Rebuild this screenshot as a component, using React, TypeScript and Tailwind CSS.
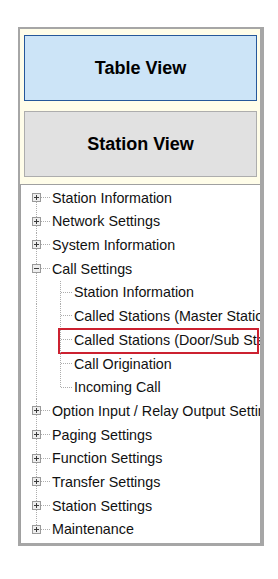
import React from "react"

type Pos = "first" | "mid" | "last"

const DOT = "#adadad"

function Expander({ open }: { open: boolean }) {
  return (
    <g shapeRendering="crispEdges">
      <rect x={11.5} y={7.5} width={8} height={8} fill="#eeeeee" stroke="#9a9a9a" />
      <line x1={13} y1={11.5} x2={18} y2={11.5} stroke="#3a3a3a" />
      {!open && <line x1={15.5} y1={9} x2={15.5} y2={14} stroke="#3a3a3a" />}
    </g>
  )
}

function RootGutter({ pos, open }: { pos: Pos; open: boolean }) {
  const y1 = pos === "first" ? 16 : 0
  const y2 = pos === "last" ? 8 : 24
  return (
    <svg className="h-full w-[30px] shrink-0">
      <g stroke={DOT} strokeDasharray="1 1" shapeRendering="crispEdges">
        <line x1={15.5} y1={y1} x2={15.5} y2={y2} />
        <line x1={20} y1={11.5} x2={29} y2={11.5} />
      </g>
      <Expander open={open} />
    </svg>
  )
}

function ChildGutter({ last }: { last: boolean }) {
  return (
    <svg className="h-full w-[52px] shrink-0">
      <g stroke={DOT} strokeDasharray="1 1" shapeRendering="crispEdges">
        <line x1={15.5} y1={0} x2={15.5} y2={24} />
        <line x1={39.5} y1={0} x2={39.5} y2={last ? 12 : 24} />
        <line x1={40} y1={11.5} x2={51} y2={11.5} />
      </g>
    </svg>
  )
}

const rootsBefore = ["Station Information", "Network Settings", "System Information"]
const children = [
  "Station Information",
  "Called Stations (Master Station)",
  "Called Stations (Door/Sub Station)",
  "Call Origination",
  "Incoming Call",
]
const rootsAfter = [
  "Option Input / Relay Output Settings",
  "Paging Settings",
  "Function Settings",
  "Transfer Settings",
  "Station Settings",
  "Maintenance",
]

function Label({ text }: { text: string }) {
  return <span className="whitespace-nowrap pl-[1px] text-[14.3px] leading-none text-[#111]">{text}</span>
}

export default function App() {
  return (
    <div className="min-h-[579px] bg-white pl-[18px] pt-[27px]" style={{ fontFamily: '"Liberation Sans", Arial, sans-serif' }}>
      <div className="flex h-[519px] w-[246px] flex-col border-b-[3px] border-l-2 border-r-4 border-t-2 border-[#a6a6a6] bg-[#fffde9]">
        <div className="flex flex-col gap-[10px] pb-[7px] pl-[4px] pr-[3px] pt-[6px]">
          <div className="flex h-[66px] items-center justify-center border border-[#25579a] bg-[#cce4f7] text-[18px] font-bold text-black">
            Table View
          </div>
          <div className="flex h-[66px] items-center justify-center border border-[#adadad] bg-[#e1e1e1] text-[18px] font-bold text-black">
            Station View
          </div>
        </div>
        <div className="flex-1 overflow-hidden border-l border-t border-[#a0a0a0] bg-white pt-[1px]">
          {rootsBefore.map((t, i) => (
            <div key={t} className="flex h-[23.7px] items-center">
              <RootGutter pos={i === 0 ? "first" : "mid"} open={false} />
              <Label text={t} />
            </div>
          ))}
          <div className="flex h-[23.7px] items-center">
            <RootGutter pos="mid" open={true} />
            <Label text="Call Settings" />
          </div>
          {children.map((t, i) => (
            <div key={t} className="relative flex h-[23.7px] items-center">
              <ChildGutter last={i === children.length - 1} />
              <Label text={t} />
              {i === 2 && (
                <div className="absolute bottom-[-2px] left-[37px] right-[1px] top-0 border-2 border-[#cc2130]" />
              )}
            </div>
          ))}
          {rootsAfter.map((t, i) => (
            <div key={t} className="flex h-[23.7px] items-center">
              <RootGutter pos={i === rootsAfter.length - 1 ? "last" : "mid"} open={false} />
              <Label text={t} />
            </div>
          ))}
        </div>
      </div>
    </div>
  )
}
